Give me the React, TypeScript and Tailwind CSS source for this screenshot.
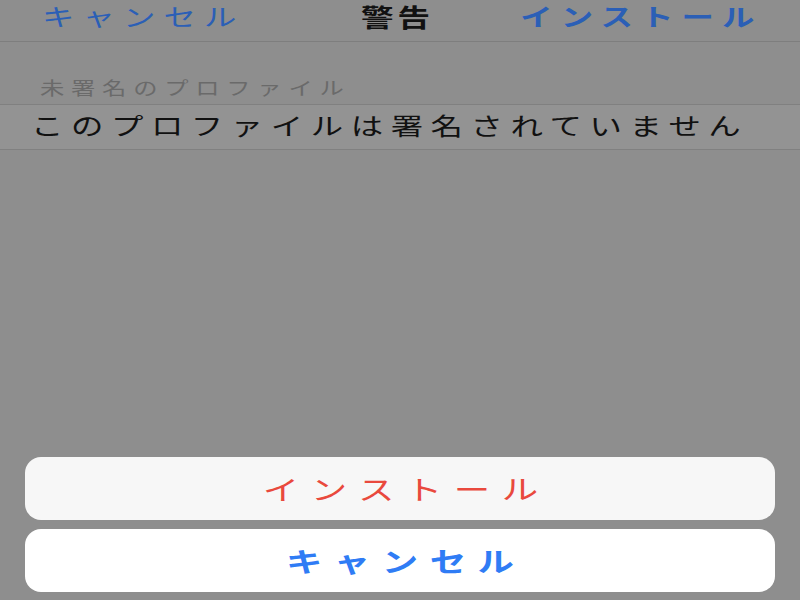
import React from "react";

const jp = { fontFamily: '"Noto Sans CJK JP", "Noto Sans", sans-serif' };

export default function App() {
  return (
    <div className="flex h-[600px] w-[800px] flex-col overflow-hidden bg-[#8e8e8e]" style={jp}>
      {/* nav bar */}
      <div className="relative flex h-[42px] shrink-0 items-center border-b border-[#7e7e7e] pb-[9px]">
        <span className="ml-[42px] inline-block origin-left scale-x-[1.35] text-[24px] leading-none tracking-[6px] text-[#2b5fb6]">
          キャンセル
        </span>
        <div className="absolute inset-y-0 left-[361px] flex items-center pb-[9px]">
          <span className="inline-block origin-left scale-x-[1.3] text-[25px] font-bold leading-none tracking-[3px] text-[#111]">
            警告
          </span>
        </div>
        <span className="ml-auto mr-[37px] inline-block origin-right scale-x-[1.35] text-[24px] font-bold leading-none tracking-[6px] text-[#2b5fb6]">
          インストール
        </span>
      </div>

      {/* section header */}
      <div className="flex h-[62px] shrink-0 items-end pb-[8px]">
        <span className="ml-[40px] inline-block origin-left scale-x-[1.35] text-[18px] leading-none tracking-[5px] text-[#6a6a6a]">
          未署名のプロファイル
        </span>
      </div>

      {/* row */}
      <div className="flex h-[46px] shrink-0 items-center border-y border-[#808080] bg-[#939393] pb-[4px]">
        <span className="ml-[31px] inline-block origin-left scale-x-[1.35] text-[24px] leading-none tracking-[5.6px] text-[#111]">
          このプロファイルは署名されていません
        </span>
      </div>

      <div className="flex-1" />

      {/* action sheet */}
      <div className="flex flex-col gap-[9px] px-[25px] pb-[8px]">
        <button className="flex h-[63px] items-center justify-center rounded-[16px] bg-[#f7f7f7]">
          <span className="inline-block scale-x-[1.35] pl-[8.5px] text-[27px] leading-none tracking-[8.5px] text-[#e9493d]">
            インストール
          </span>
        </button>
        <button className="flex h-[63px] items-center justify-center rounded-[16px] bg-white">
          <span className="inline-block scale-x-[1.35] pl-[8.5px] text-[27px] font-bold leading-none tracking-[8.5px] text-[#2f7cf5]">
            キャンセル
          </span>
        </button>
      </div>
    </div>
  );
}
